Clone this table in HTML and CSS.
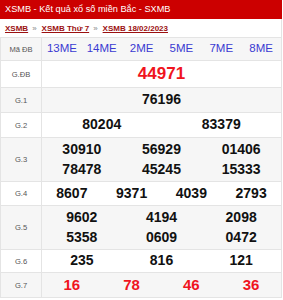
FILE: index.html
```html
<!DOCTYPE html>
<html lang="vi">
<head>
<meta charset="utf-8">
<title>XSMB</title>
<link rel="stylesheet" href="styles.css">
</head>
<body>
<div class="page">
  <div class="title">XSMB - Kết quả xổ số miền Bắc - SXMB</div>
  <div class="crumbs">
    <a href="#">XSMB</a><span class="sep">»</span><a href="#">XSMB Thứ 7</a><span class="sep">»</span><a href="#">XSMB 18/02/2023</a>
  </div>
  <div class="table">
    <div class="row alt h-code">
      <div class="lbl">Mã ĐB</div>
      <div class="nums c6 code"><span>13ME</span><span>14ME</span><span>2ME</span><span>5ME</span><span>7ME</span><span>8ME</span></div>
    </div>
    <div class="row h-db">
      <div class="lbl">G.ĐB</div>
      <div class="nums c1 db"><span>44971</span></div>
    </div>
    <div class="row alt h-one">
      <div class="lbl">G.1</div>
      <div class="nums c1"><span>76196</span></div>
    </div>
    <div class="row h-one">
      <div class="lbl">G.2</div>
      <div class="nums c2"><span>80204</span><span>83379</span></div>
    </div>
    <div class="row alt h-two">
      <div class="lbl">G.3</div>
      <div class="nums c3"><span>30910</span><span>56929</span><span>01406</span><span>78478</span><span>45245</span><span>15333</span></div>
    </div>
    <div class="row h-g4">
      <div class="lbl">G.4</div>
      <div class="nums c4"><span>8607</span><span>9371</span><span>4039</span><span>2793</span></div>
    </div>
    <div class="row alt h-two">
      <div class="lbl">G.5</div>
      <div class="nums c3"><span>9602</span><span>4194</span><span>2098</span><span>5358</span><span>0609</span><span>0472</span></div>
    </div>
    <div class="row h-g6">
      <div class="lbl">G.6</div>
      <div class="nums c3"><span>235</span><span>816</span><span>121</span></div>
    </div>
    <div class="row alt h-one">
      <div class="lbl">G.7</div>
      <div class="nums c4 red"><span>16</span><span>78</span><span>46</span><span>36</span></div>
    </div>
  </div>
</div>
</body>
</html>
```

FILE: styles.css
```css
html, body {
  margin: 0;
  padding: 0;
  background: #ffffff;
}

body {
  font-family: "Liberation Sans", Arial, sans-serif;
}

.page {
  width: 282px;
}

.title {
  height: 19px;
  background: #cc0000;
  color: #ffffff;
  font-size: 9.2px;
  line-height: 19px;
  padding-left: 5px;
  white-space: nowrap;
}

.crumbs {
  height: 18px;
  display: flex;
  align-items: center;
  padding-left: 5px;
  font-size: 8px;
  font-weight: bold;
  border-right: 1px solid #e4e4e4;
}

.crumbs a {
  color: #9b1010;
  text-decoration: underline;
}

.sep {
  color: #888888;
  font-weight: normal;
  margin: 0 5px 0 4px;
}

.table {
  border-top: 1px solid #e4e4e4;
  border-left: 1px solid #e4e4e4;
  border-right: 1px solid #e4e4e4;
}

.row {
  display: grid;
  grid-template-columns: 41px 1fr;
  border-bottom: 1px solid #e4e4e4;
  background: #ffffff;
}

.row.alt {
  background: #f6f6f6;
}

.h-code { height: 22px; }
.h-db { height: 26px; }
.h-one { height: 24px; }
.h-g4 { height: 23px; }
.h-g6 { height: 22px; }
.h-two { height: 43px; }

.lbl {
  border-right: 1px solid #e4e4e4;
  display: flex;
  align-items: center;
  justify-content: center;
  font-size: 7.6px;
  color: #555555;
}

.nums {
  display: grid;
  align-content: center;
  justify-items: center;
  font-size: 14px;
  font-weight: bold;
  color: #111111;
  line-height: 19.5px;
}

.c1 { grid-template-columns: 1fr; }
.c2 { grid-template-columns: repeat(2, 1fr); }
.c3 { grid-template-columns: repeat(3, 1fr); }
.c4 { grid-template-columns: repeat(4, 1fr); }
.c6 { grid-template-columns: repeat(6, 1fr); }

.code {
  font-size: 11.5px;
  font-weight: normal;
  color: #3a3ad2;
}

.db {
  font-size: 17px;
  color: #f0141e;
}

.red {
  font-size: 15px;
  color: #f0141e;
}
```
